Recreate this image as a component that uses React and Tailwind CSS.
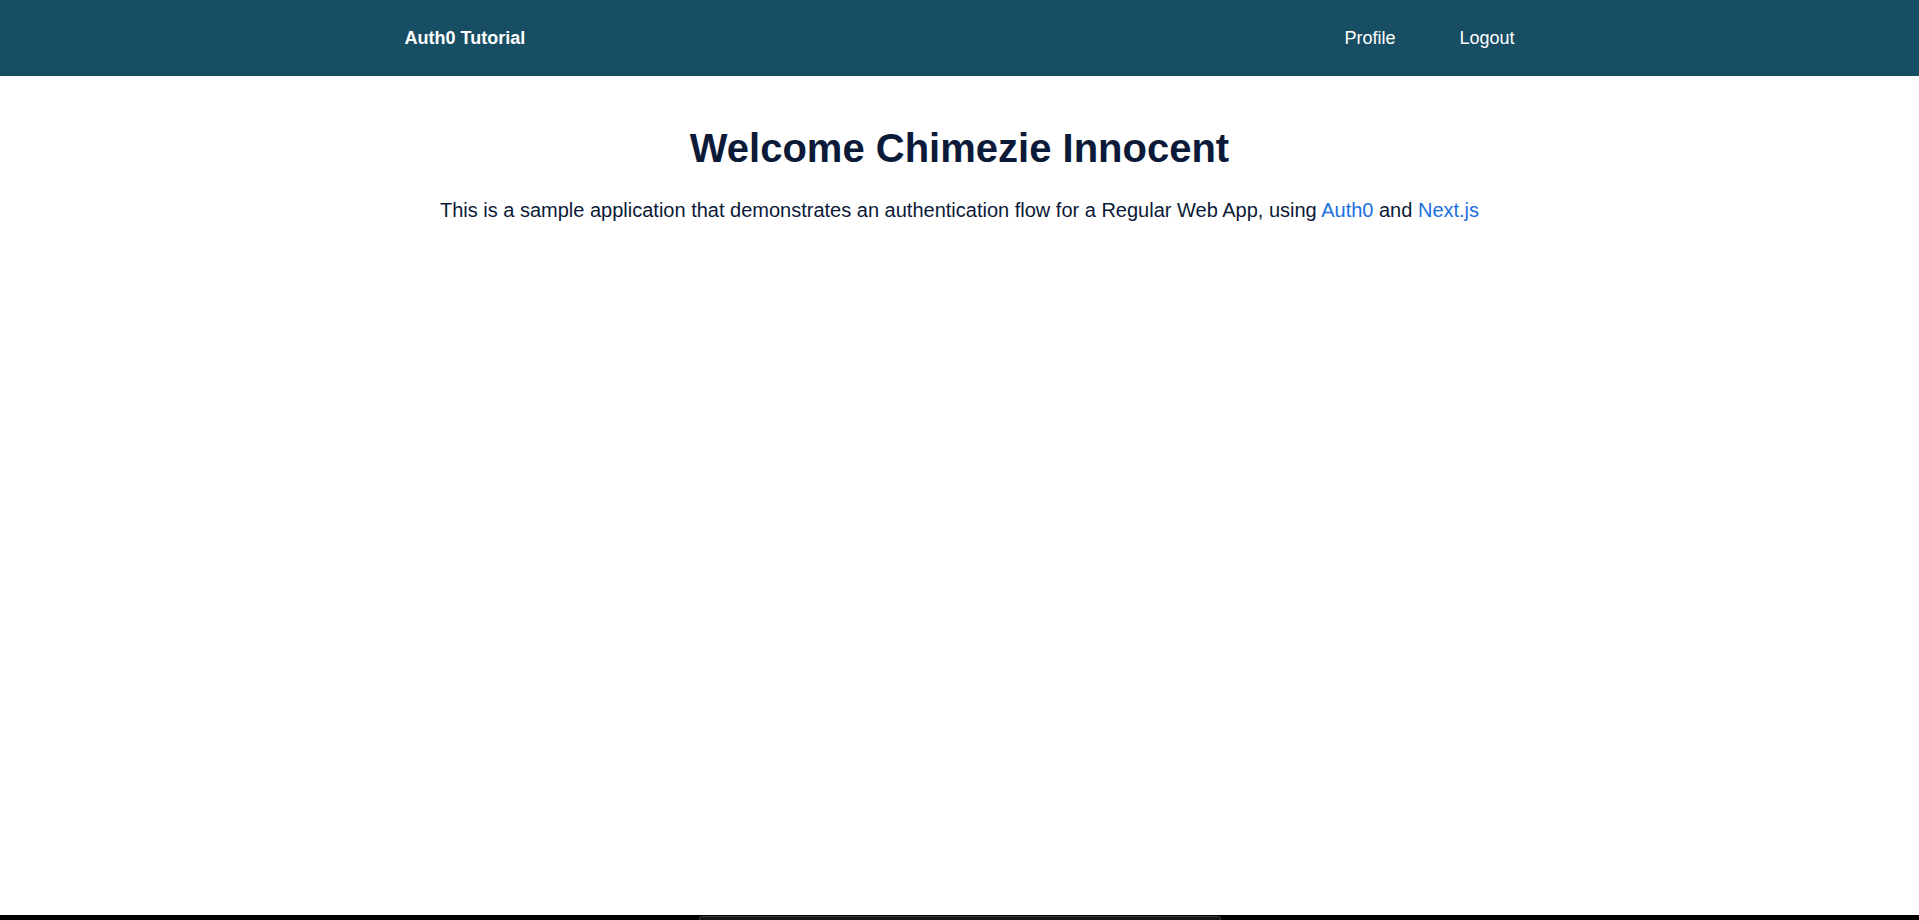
import React from 'react';

const App = () => {
  const user = { name: 'Chimezie Innocent' };

  return (
    <div className="h-screen flex flex-col bg-white font-['Liberation_Sans',Arial,sans-serif]">
      {/* Navbar */}
      <header className="h-[76px] shrink-0 bg-[#184e63]">
        <nav className="w-[1110px] h-full mx-auto flex items-center justify-between">
          <a href="#" className="text-[18px] font-bold text-white">Auth0 Tutorial</a>
          <div className="flex items-center gap-[64px]">
            <a href="#" className="text-[18px] text-white">Profile</a>
            <a href="#" className="text-[18px] text-white">Logout</a>
          </div>
        </nav>
      </header>

      {/* Content */}
      <main className="flex-1 text-center text-[#0b1a38]">
        <h1 className="mt-12 text-[40px] leading-[48px] font-bold">Welcome {user.name}</h1>
        <p className="mt-6 text-[20px] leading-[28px]">
          This is a sample application that demonstrates an authentication flow for a Regular Web App, using{' '}
          <a href="#" className="text-[#1c6fe0]">Auth0</a> and{' '}
          <a href="#" className="text-[#1c6fe0]">Next.js</a>
        </p>
      </main>

      {/* bottom strip */}
      <div className="h-[5px] shrink-0 bg-black flex justify-center items-end">
        <div className="w-[522px] h-[4px] rounded-t-md border-t border-x border-[#3c3c3c] bg-[#141414]"></div>
      </div>
    </div>
  );
};

export default App;
